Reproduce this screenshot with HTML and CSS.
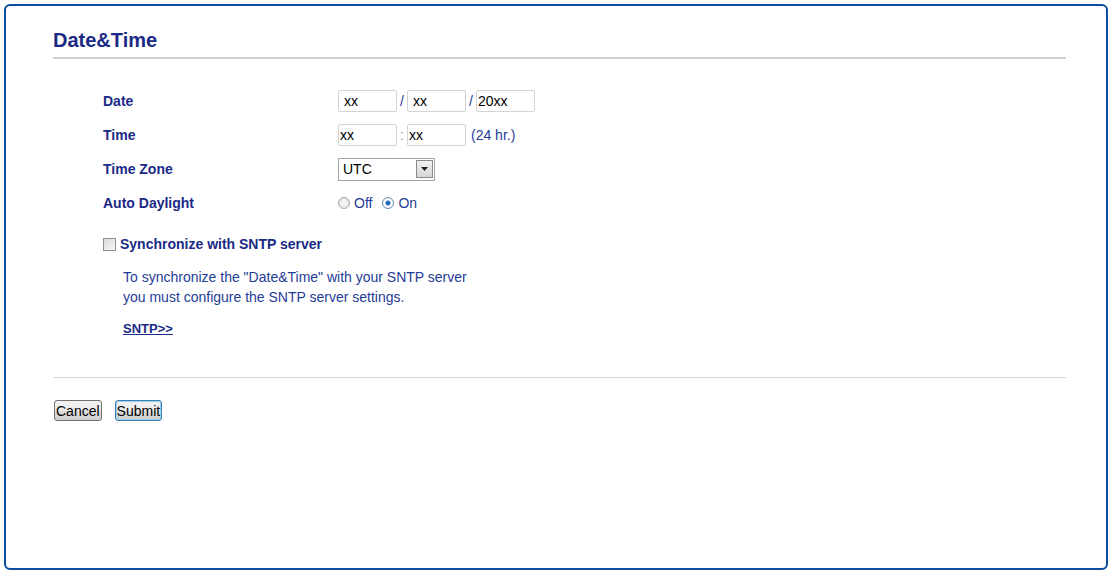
FILE: index.html
```html
<!DOCTYPE html>
<html>
<head>
<meta charset="utf-8">
<link rel="stylesheet" href="styles.css">
</head>
<body>
<div class="frame">
  <h1 class="title">Date&amp;Time</h1>
  <div class="form">
    <div class="label">Date</div>
    <div class="field">
      <input class="txt" type="text" value=" xx"><span class="sep">/</span><input class="txt" type="text" value=" xx"><span class="sep">/</span><input class="txt" type="text" value="20xx">
    </div>
    <div class="label">Time</div>
    <div class="field">
      <input class="txt" type="text" value="xx"><span class="sep colon">:</span><input class="txt" type="text" value="xx"><span class="hint">(24 hr.)</span>
    </div>
    <div class="label">Time Zone</div>
    <div class="field">
      <span class="select"><span class="select-val">UTC</span><span class="select-btn"><svg width="7" height="4" viewBox="0 0 7 4"><path d="M0 0H7L3.5 4Z" fill="#222"/></svg></span></span>
    </div>
    <div class="label">Auto Daylight</div>
    <div class="field">
      <label class="radio"><input type="radio" name="dl"><span>Off</span></label>
      <label class="radio"><input type="radio" name="dl" checked><span>On</span></label>
    </div>
  </div>
  <div class="sync">
    <label class="check"><input type="checkbox"><span>Synchronize with SNTP server</span></label>
    <p class="note">To synchronize the "Date&amp;Time" with your SNTP server<br>you must configure the SNTP server settings.</p>
    <a class="link" href="#">SNTP&gt;&gt;</a>
  </div>
  <div class="footer">
    <button class="btn">Cancel</button>
    <button class="btn primary">Submit</button>
  </div>
</div>
</body>
</html>
```

FILE: styles.css
```css
html, body {
  margin: 0;
  padding: 0;
  background: #fff;
}
body {
  padding: 4px 2px 0 4px;
  font-family: "Liberation Sans", Arial, sans-serif;
}
.frame {
  box-sizing: border-box;
  width: 1104px;
  height: 566px;
  border: 2px solid #0b4f9c;
  border-radius: 6px;
  padding: 22px 40px 0 47px;
}
.title {
  margin: 0;
  font-size: 20px;
  line-height: 24px;
  font-weight: bold;
  color: #1a2a86;
  padding-bottom: 5px;
  border-bottom: 2px solid #cfcfcf;
}
.form {
  display: grid;
  grid-template-columns: 235px auto;
  grid-auto-rows: 34px;
  align-items: center;
  margin: 25px 0 0 50px;
}
.label {
  font-size: 14px;
  font-weight: bold;
  color: #1a2a86;
}
.field {
  display: flex;
  align-items: center;
  font-size: 14px;
  color: #1f3c96;
}
.txt {
  box-sizing: border-box;
  width: 59px;
  height: 22px;
  margin: 0;
  padding: 0 1px;
  border: 1px solid #d4d4d4;
  border-radius: 2px;
  font-family: "Liberation Sans", Arial, sans-serif;
  font-size: 14px;
  color: #000;
  background: #fff;
  outline: none;
}
.sep {
  width: 10px;
  text-align: center;
  color: #1f3c96;
}
.colon {
  color: #8aa0c8;
}
.hint {
  margin-left: 5px;
}
.select {
  box-sizing: border-box;
  width: 97px;
  height: 23px;
  border: 1px solid #a5a5a5;
  display: flex;
  align-items: center;
  justify-content: space-between;
  padding: 0 1px 0 4px;
  background: #fff;
}
.select-val {
  font-size: 14px;
  color: #000;
}
.select-btn {
  box-sizing: border-box;
  width: 17px;
  height: 18px;
  border: 1px solid #8c8c8c;
  background: linear-gradient(#f2f2f2, #d6d6d6);
  display: flex;
  align-items: center;
  justify-content: center;
}
.radio {
  display: flex;
  align-items: center;
  margin-right: 10px;
}
.radio input {
  -webkit-appearance: none;
  appearance: none;
  box-sizing: border-box;
  width: 12px;
  height: 12px;
  margin: 0 4px 0 0;
  border: 1px solid #a8a8a8;
  border-radius: 50%;
  background: radial-gradient(circle, #fafafa 0, #dcdcdc 100%);
}
.radio input:checked {
  border-color: #6a8bb0;
  background: radial-gradient(circle, #1d5fb5 0, #2a6cc0 2px, #ffffff 3px, #e8eef5 100%);
}
.sync {
  margin: 16px 0 0 50px;
}
.check {
  display: flex;
  align-items: center;
  font-size: 14px;
  font-weight: bold;
  color: #1a2a86;
  height: 16px;
}
.check input {
  -webkit-appearance: none;
  appearance: none;
  box-sizing: border-box;
  width: 13px;
  height: 13px;
  margin: 0 4px 0 0;
  border: 1px solid #8f8f8f;
  background: linear-gradient(135deg, #dcdcdc, #f6f6f6);
}
.note {
  margin: 15px 0 0 20px;
  font-size: 14px;
  line-height: 20px;
  color: #1f3c96;
}
.link {
  display: inline-block;
  margin: 14px 0 0 20px;
  font-size: 13px;
  font-weight: bold;
  color: #1a2a86;
  text-decoration: underline;
}
.footer {
  margin-top: 40px;
  border-top: 1px solid #d8d8d8;
  padding-top: 22px;
  display: flex;
  gap: 12px;
}
.btn {
  box-sizing: border-box;
  height: 21px;
  padding: 0 1px;
  margin: 0 0 0 1px;
  font-family: "Liberation Sans", Arial, sans-serif;
  font-size: 14px;
  color: #000;
  border: 1px solid #707070;
  border-radius: 3px;
  background: linear-gradient(#f2f2f2 0, #ebebeb 50%, #dddddd 51%, #cfcfcf 100%);
}
.btn.primary {
  border-color: #3c7fb1;
  box-shadow: inset 0 0 0 1px #9ad2f4;
}
```
